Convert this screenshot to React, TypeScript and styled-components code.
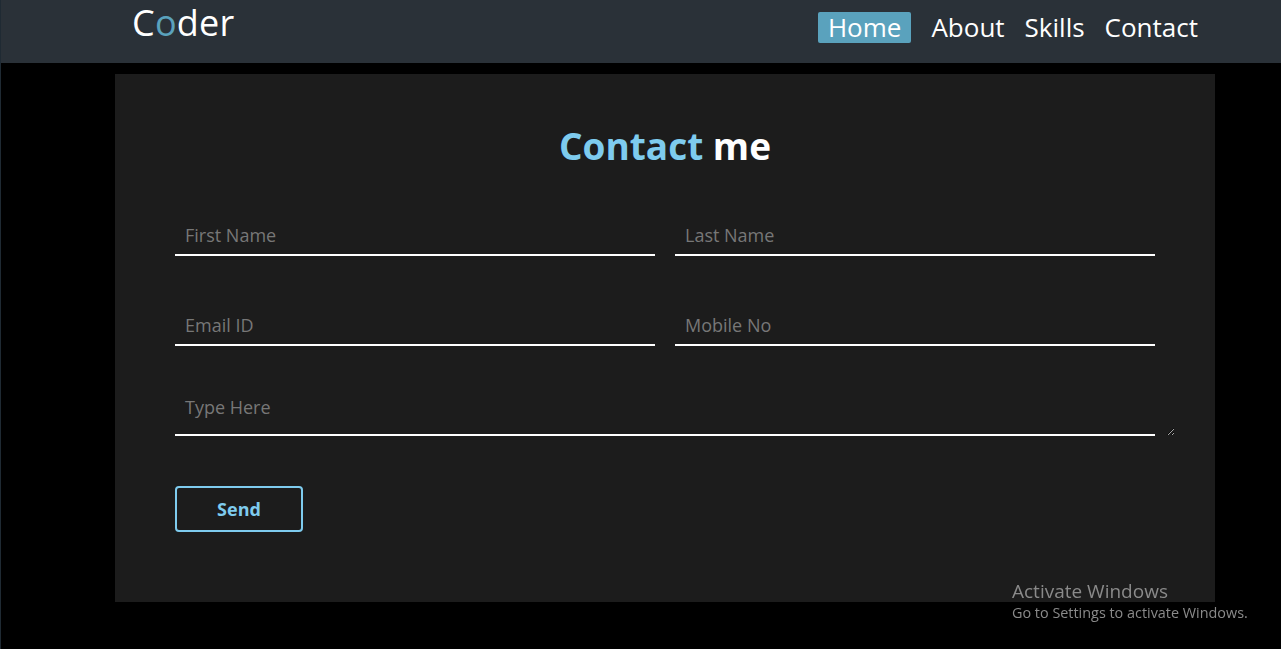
import React from "react";
import styled, { createGlobalStyle } from "styled-components";

const Global = createGlobalStyle`
  html, body { margin: 0; padding: 0; background: #000; }
  * { box-sizing: border-box; }
  body { font-family: "Open Sans", "Noto Sans", sans-serif; }
`;

const Page = styled.div`
  min-height: 649px;
  background: #000;
  border-left: 1px solid #1f2a33;
  padding-bottom: 47px;
`;

const Header = styled.header`
  height: 63px;
  background: #2a3138;
  display: flex;
  align-items: flex-start;
  justify-content: space-between;
  padding: 0 73px 0 131px;
`;

const Logo = styled.div`
  font-size: 36px;
  line-height: 1;
  color: #fff;
  margin-top: 5px;
  letter-spacing: 0.2px;
  span { color: #5aa2bd; }
`;

const Nav = styled.nav`
  display: flex;
  margin-top: 12px;
`;

const NavLink = styled.a<{ $active?: boolean }>`
  display: block;
  height: 31px;
  line-height: 31px;
  padding: 0 10px;
  margin-right: ${(p) => (p.$active ? "10px" : "0")};
  font-size: 26px;
  color: #fff;
  text-decoration: none;
  border-radius: 2px;
  background: ${(p) => (p.$active ? "#5aa2bd" : "transparent")};
`;

const Card = styled.section`
  width: 1100px;
  margin: 11px 0 0 114px;
  background: #1c1c1c;
  padding: 48px 60px 70px;
`;

const Title = styled.h1`
  margin: 0 0 46px;
  text-align: center;
  font-size: 37px;
  line-height: 48px;
  font-weight: 700;
  color: #fff;
  span { color: #7ecbee; }
`;

const Row = styled.div`
  display: grid;
  grid-template-columns: 480px 480px;
  column-gap: 20px;
  margin-bottom: 50px;
`;

const Field = styled.input`
  display: block;
  width: 100%;
  height: 40px;
  padding: 0 10px;
  background: transparent;
  border: none;
  border-bottom: 2px solid #fff;
  outline: none;
  color: #fff;
  font-family: "Open Sans", "Noto Sans", sans-serif;
  font-size: 18px;
  &::placeholder { color: #777; }
`;

const AreaWrap = styled.div`
  width: 980px;
  height: 50px;
  margin-top: -10px;
  border-bottom: 2px solid #fff;
`;

const Area = styled.textarea`
  display: block;
  width: 1000px;
  height: 50px;
  padding: 10px;
  background: transparent;
  border: none;
  outline: none;
  resize: vertical;
  color: #fff;
  font-family: "Open Sans", "Noto Sans", sans-serif;
  font-size: 18px;
  line-height: 22px;
  &::placeholder { color: #777; }
`;

const Send = styled.button`
  display: block;
  margin-top: 50px;
  width: 128px;
  height: 46px;
  background: transparent;
  border: 2px solid #7ecbee;
  border-radius: 4px;
  color: #7ecbee;
  font-family: "Open Sans", "Noto Sans", sans-serif;
  font-weight: 700;
  font-size: 18px;
  cursor: pointer;
`;

const Watermark = styled.div`
  position: fixed;
  left: 1012px;
  top: 579px;
  color: #8a8a8a;
  font-family: "Open Sans", "Noto Sans", sans-serif;
  pointer-events: none;
`;

const WmTitle = styled.div`
  font-size: 19px;
  line-height: 24px;
`;

const WmSub = styled.div`
  font-size: 14.4px;
  line-height: 20px;
`;

export default function App() {
  return (
    <>
      <Global />
      <Page>
        <Header>
          <Logo>
            C<span>o</span>der
          </Logo>
          <Nav>
            <NavLink $active href="#">Home</NavLink>
            <NavLink href="#">About</NavLink>
            <NavLink href="#">Skills</NavLink>
            <NavLink href="#">Contact</NavLink>
          </Nav>
        </Header>
        <Card>
          <Title>
            <span>Contact</span> me
          </Title>
          <Row>
            <Field placeholder="First Name" />
            <Field placeholder="Last Name" />
          </Row>
          <Row>
            <Field placeholder="Email ID" />
            <Field placeholder="Mobile No" />
          </Row>
          <AreaWrap>
            <Area placeholder="Type Here" />
          </AreaWrap>
          <Send>Send</Send>
        </Card>
        <Watermark>
          <WmTitle>Activate Windows</WmTitle>
          <WmSub>Go to Settings to activate Windows.</WmSub>
        </Watermark>
      </Page>
    </>
  );
}
